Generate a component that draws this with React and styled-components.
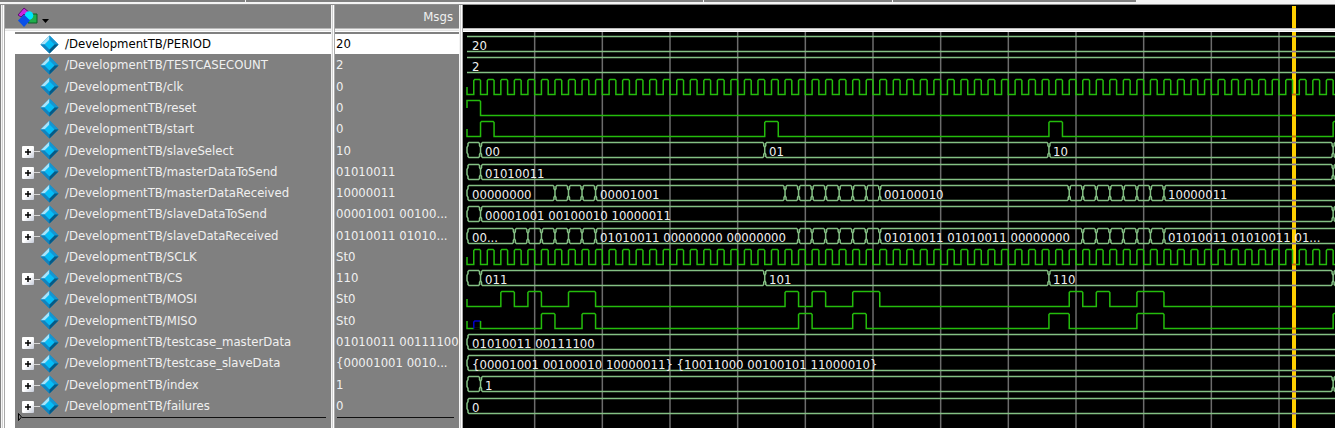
import React from "react";
import styled, { createGlobalStyle } from "styled-components";

const ROW_COUNT = 18;
const ROWS_HEIGHT = 383;
const PITCH = ROWS_HEIGHT / ROW_COUNT;
const HALF = 203 / 30;
const ORIGIN = 4;
const END = 400;
const CURSOR = 831;

const burst = (from, to) => {
  const out = [];
  for (let k = from; k <= to; k += 2) out.push(k);
  return out;
};
const clock = burst(1, END).map((k) => [k, k + 1]);

const signals = [
  { name: "PERIOD", value: "20", kind: "const", labels: [[0, "20"]] },
  { name: "TESTCASECOUNT", value: "2", kind: "const", labels: [[0, "2"]] },
  { name: "clk", value: "0", kind: "bit", high: clock },
  { name: "reset", value: "0", kind: "bit", high: [[0, 2]] },
  { name: "start", value: "0", kind: "bit", high: [[2, 4], [44, 46], [86, 88], [128, 130]] },
  { name: "slaveSelect", value: "10", kind: "bus", changes: [2, 44, 86, 128], labels: [[2, "00"], [44, "01"], [86, "10"]] },
  { name: "masterDataToSend", value: "01010011", kind: "bus", changes: [2, 128], labels: [[2, "01010011"]] },
  {
    name: "masterDataReceived", value: "10000011", kind: "bus",
    changes: [...burst(13, 19), ...burst(47, 61), ...burst(89, 103)],
    labels: [[0, "00000000"], [19, "00001001"], [61, "00100010"], [103, "10000011"]],
  },
  { name: "slaveDataToSend", value: "00001001 00100...", kind: "bus", changes: [2, 128], labels: [[2, "00001001 00100010 10000011"]] },
  {
    name: "slaveDataReceived", value: "01010011 01010...", kind: "bus",
    changes: [...burst(7, 19), ...burst(49, 61), ...burst(91, 103)],
    labels: [[0, "00..."], [19, "01010011 00000000 00000000"], [61, "01010011 01010011 00000000"], [103, "01010011 01010011 01..."]],
  },
  { name: "SCLK", value: "St0", kind: "bit", high: clock },
  { name: "CS", value: "110", kind: "bus", changes: [2, 44, 86, 128], labels: [[2, "011"], [44, "101"], [86, "110"]] },
  {
    name: "MOSI", value: "St0", kind: "bit",
    high: [[5, 7], [9, 11], [15, 19], [47, 49], [51, 53], [57, 61], [89, 91], [93, 95], [99, 103]],
  },
  {
    name: "MISO", value: "St0", kind: "bit", floating: true,
    high: [[11, 13], [17, 19], [49, 51], [57, 59], [86, 89], [99, 103], [128, 130]],
  },
  { name: "testcase_masterData", value: "01010011 00111100", kind: "bus", changes: [], labels: [[0, "01010011 00111100"]] },
  {
    name: "testcase_slaveData", value: "{00001001 0010...", kind: "bus", changes: [],
    labels: [[0, "{00001001 00100010 10000011} {10011000 00100101 11000010}"]],
  },
  { name: "index", value: "1", kind: "bus", changes: [2, 128], labels: [[2, "1"]] },
  { name: "failures", value: "0", kind: "bus", changes: [], labels: [[0, "0"]] },
];

const GlobalStyle = createGlobalStyle`
  * { box-sizing: border-box; }
  html, body { margin: 0; background: #808080; }
  body {
    font-family: "DejaVu Sans Condensed", "Noto Sans", sans-serif;
    font-size: 13px;
    color: #f0f0f0;
  }
`;

const Window = styled.main`
  min-height: 100vh;
  display: flex;
  flex-direction: column;
  overflow: hidden;
`;

const TabStrip = styled.div`
  height: 5px;
  flex: none;
  display: flex;
  gap: 1px;
  background: #f4f4f4;
  border-bottom: 1px solid #909090;
`;

const TabEdge = styled.div`
  height: 2px;
  background: #808080;
  flex: ${(p) => p.$share} 1 0;
  visibility: ${(p) => (p.$blank ? "hidden" : "visible")};
`;

const Viewer = styled.div`
  flex: 1;
  display: grid;
  grid-template-columns: 330px 128px minmax(0, 1fr);
  border-left: 1px solid #808080;
`;

const Column = styled.section`
  display: flex;
  flex-direction: column;
  min-width: 0;
  padding-left: 4px;
  background:
    linear-gradient(to right, #f4f4f4 1px, #d0d0d0 1px 2px, #fff 2px 3px, #a8a8a8 3px) left / 4px 100% no-repeat,
    ${(p) => (p.$dark ? "#000" : "#808080")};
`;

const Header = styled.header`
  height: 27px;
  flex: none;
  display: flex;
  align-items: center;
  justify-content: ${(p) => (p.$end ? "flex-end" : "flex-start")};
  padding: 0 6px 4px 12px;
  background: linear-gradient(#b8b8b8 1px, #f4f4f4 1px 2px, #e4e4e4 2px 3px, #fff 3px) bottom / 100% 4px no-repeat;
  position: relative;
`;

const MenuButton = styled.button`
  border: 0;
  background: none;
  padding: 0;
  display: flex;
`;

const Rows = styled.ul`
  list-style: none;
  margin: 0 0 0 ${(p) => (p.$gutter ? 10 : 0)}px;
  padding: 1px 0 0;
  display: grid;
  grid-template-rows: repeat(${ROW_COUNT}, 1fr);
  height: ${ROWS_HEIGHT + 1}px;
  flex: none;
`;

const Gutter = styled.div`
  flex: 1;
  background: linear-gradient(to right, #fff 10px, #808080 10px);
`;

const Row = styled.li`
  display: flex;
  align-items: center;
  min-width: 0;
  min-height: 0;
  line-height: 20px;
  margin-top: 1px;
  color: ${(p) => (p.$selected ? "#000" : "#f0f0f0")};
  background: ${(p) => (p.$selected ? "#fff" : "transparent")};
  padding-left: ${(p) => (p.$value ? 1 : 7)}px;
`;

const Branch = styled.span`
  width: 18px;
  flex: none;
  display: flex;
  align-items: center;
  padding-top: 2px;
`;

const Expander = styled.button`
  width: 12px;
  height: 12px;
  flex: none;
  border: 0;
  padding: 0;
  border-radius: 1px;
  background: linear-gradient(135deg, #fff 50%, #c4cad8);
  display: grid;
  place-items: center;
`;

const Stem = styled.span`
  flex: 1;
  height: 1px;
  background: #d8d8d8;
`;

const Name = styled.span`
  margin-left: 6px;
  white-space: nowrap;
`;

const Value = styled.span`
  white-space: nowrap;
`;

const EndLine = styled.div`
  display: flex;
  align-items: center;
  height: 8px;
  margin-top: -3px;
  margin-left: ${(p) => (p.$gutter ? 13 : 2)}px;
  margin-right: 5px;
`;

const Rule = styled.span`
  flex: 1;
  height: 1px;
  background: #101010;
`;

const Plot = styled.svg`
  display: block;
  width: 100%;
  flex: 1;
  min-height: 396px;
`;

const HeaderCursor = styled.span`
  position: absolute;
  left: ${CURSOR - 2}px;
  top: 1px;
  bottom: 4px;
  width: 4px;
  background: #ffcf00;
`;

const Diamond = () => (
  <svg width="19" height="19" viewBox="0 0 19 19" aria-hidden="true">
    <path d="M9.500 .5 18.500 9.500 9.500 18.500 .5 9.500Z" fill="#0a86c0" />
    <path d="M9.500 .5V5L5 9.500H.5Z" fill="#a8e4fb" />
    <path d="M9.500 .5V5L14 9.500H18.500Z" fill="#1496d2" />
    <path d="M.5 9.500H5L9.500 14V18.500Z" fill="#1084c0" />
    <path d="M18.500 9.500H14L9.500 14V18.500Z" fill="#055a86" />
    <path d="M9.500 4.500 14.500 9.500 9.500 14.500 4.500 9.500Z" fill="#06bdf6" />
  </svg>
);

const SignalsIcon = () => (
  <svg width="34" height="22" viewBox="0 0 34 22" aria-hidden="true">
    <path d="M1 9 7 2l6 5-3 4-3-3-3 3Z" fill="#c828e0" stroke="#5c1070" />
    <path d="M12 8h8v9h-9Z" fill="#1fae4b" stroke="#0c5c28" />
    <circle cx="12" cy="9.500" r="4.300" fill="#00e5ff" />
    <path d="M7 8.500 13 14.500 7 21 1 14.500Z" fill="#0a50e8" />
    <path d="M25 13h7l-3.500 4Z" fill="#000" />
  </svg>
);

const x = (k) => ORIGIN + k * HALF;

function bitPath(signal) {
  const startsHigh = signal.high[0][0] === 0;
  let d = `M${x(0)} 8V${startsHigh ? 0.5 : 15.5}`;
  signal.high.forEach(([a, b]) => {
    if (a > 0) d += `H${x(a)}V1.500l1-1`;
    d += `H${x(b) - 1}l1 1V15.500`;
  });
  return `${d}H${x(END)}`;
}

function busPath(changes) {
  const stops = [0, ...changes, END];
  let d = "";
  for (let i = 0; i < stops.length - 1; i++) {
    const a = x(stops[i]);
    const b = x(stops[i + 1]);
    d += `M${b - 2} .5H${a + 2}l-1 1v2l-1 2v5l1 2v2l1 1H${b - 2}l1-1v-2l1-2v-5l-1-2v-2Z`;
  }
  return d;
}

function Wave({ signal, index }) {
  const bit = signal.kind === "bit";
  const d = bit ? bitPath(signal) : signal.kind === "bus" ? busPath(signal.changes) : `M4 .5H${x(END)}M4 15.500H${x(END)}`;
  return (
    <g transform={`translate(0 ${4 + Math.round(index * PITCH)})`}>
      <path d={d} fill="none" stroke={bit ? "#24bc0c" : "#84c084"} strokeWidth="1.500" />
      {signal.floating && (
        <g fill="none">
          <path d={`M${x(1)} 15.500H${x(2)}`} stroke="#000" strokeWidth="2" />
          <path d={`M${x(1)} 15.500V9l1-1H${x(2)}`} stroke="#0000c8" strokeWidth="1.500" />
          <path d={`M${x(2)} 8V16`} stroke="#24bc0c" strokeWidth="1.500" />
        </g>
      )}
      <path
        d={`M${CURSOR - 2} 15.500h4${bit ? "" : `M${CURSOR - 2} .5h4`}`}
        stroke={bit ? "#dc5c10" : "#98709c"}
        strokeWidth="1.500"
      />
      {(signal.labels || []).map(([k, text]) => (
        <text key={k} x={Math.floor(x(k)) + 5} y="14" fill="#f0f0f0">{text}</text>
      ))}
    </g>
  );
}

export default function App() {
  return (
    <>
      <GlobalStyle />
      <Window>
        <TabStrip>
          <TabEdge $share={245} />
          <TabEdge $share={458} />
          <TabEdge $share={188} />
          <TabEdge $share={243} />
          <TabEdge $share={198} $blank />
        </TabStrip>
        <Viewer>
          <Column>
            <Header>
              <MenuButton aria-label="Signal kinds"><SignalsIcon /></MenuButton>
            </Header>
            <Gutter>
              <Rows $gutter>
                {signals.map((s, i) => (
                  <Row key={s.name} $selected={i === 0}>
                    <Branch>
                      {s.kind === "bus" && (
                        <>
                          <Expander aria-label={`Expand ${s.name}`}>
                            <svg width="8" height="8" viewBox="0 0 8 8"><path d="M4 1V7M1 4H7" stroke="#000" strokeWidth="1.500" /></svg>
                          </Expander>
                          <Stem />
                        </>
                      )}
                    </Branch>
                    <Diamond />
                    <Name>/DevelopmentTB/{s.name}</Name>
                  </Row>
                ))}
              </Rows>
              <EndLine $gutter>
                <svg width="4" height="8" viewBox="0 0 4 8"><path d="M.5 .5 3.500 4 .5 7.500Z" fill="#808080" stroke="#000" /></svg>
                <Rule />
              </EndLine>
            </Gutter>
          </Column>
          <Column>
            <Header $end>Msgs</Header>
            <Rows>
              {signals.map((s, i) => (
                <Row key={s.name} $value $selected={i === 0}><Value>{s.value}</Value></Row>
              ))}
            </Rows>
            <EndLine><Rule /></EndLine>
          </Column>
          <Column $dark>
            <Header><HeaderCursor /></Header>
            <Plot>
              {Array.from({ length: 40 }, (_, i) => (
                <path key={i} d={`M${x((i + 1) * 10)} 0V2000`} stroke="#6c6c6c" strokeWidth="1.500" />
              ))}
              <rect x={CURSOR - 2} y="0" width="4" height="2000" fill="#ffcf00" />
              {signals.map((s, i) => <Wave key={s.name} signal={s} index={i} />)}
            </Plot>
          </Column>
        </Viewer>
      </Window>
    </>
  );
}
